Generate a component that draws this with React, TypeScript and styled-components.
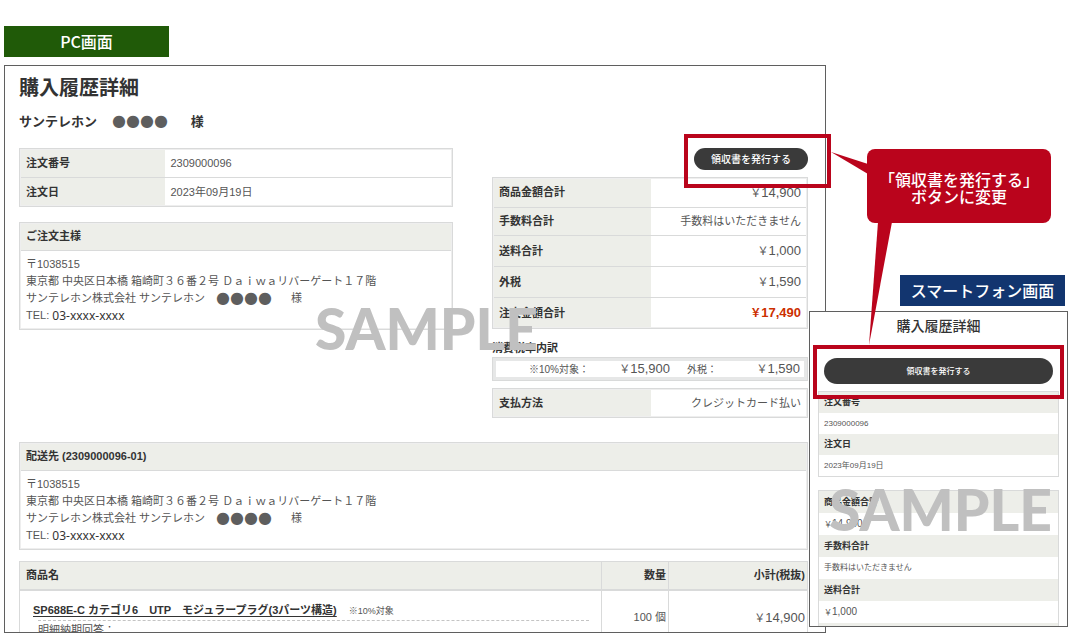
import React from "react";
import styled, { createGlobalStyle } from "styled-components";

const RED = "#ba041c";
const LINE = "#d9dada";
const HEAD = "#edeee9";

const GlobalStyle = createGlobalStyle`
  * { box-sizing: border-box; }
  body {
    margin: 0;
    background: #fff;
    color: #555;
    font-family: "Liberation Sans", "Noto Sans CJK JP", sans-serif;
    font-size: 11px;
    line-height: 17px;
  }
  h1, h2, h3, p, dl, dd { margin: 0; }
`;

const Page = styled.main`
  display: grid;
  grid-template-columns: minmax(0, 1fr) 242px;
  padding: 26px 4px 8px;
`;

const DesktopColumn = styled.section`
  display: flex;
  flex-direction: column;
  align-items: flex-start;
  gap: 8px;
`;

const PhoneColumn = styled.section`
  position: relative;
  display: flex;
  flex-direction: column;
  align-items: flex-end;
  padding-top: 123px;
`;

const ScreenTag = styled.h2<{ $color: string }>`
  width: 165px;
  height: 31px;
  background: ${(p) => p.$color};
  color: #fff;
  font: 500 16px/30px "Noto Sans CJK JP", sans-serif;
  text-align: center;
`;

const DesktopFrame = styled.div`
  position: relative;
  width: 100%;
  padding: 10px 17px 0 14px;
  border: 1px solid #5f5f5f;
`;

const Title = styled.h1`
  color: #333;
  font-size: 20px;
  font-weight: 700;
  line-height: 24px;
`;

const Customer = styled.p`
  display: flex;
  align-items: center;
  margin: 12px 0 16px;
  color: #333;
  font-size: 13px;
  font-weight: 700;
  line-height: 20px;
`;

const Mask = styled.span<{ $before: number; $after: number }>`
  margin: 0 ${(p) => p.$after}px 0 ${(p) => p.$before}px;
  padding-bottom: 2px;
  color: #5e5e5e;
  font: 400 16px/14px "DejaVu Sans", sans-serif;
`;

const Summary = styled.div`
  display: grid;
  grid-template-columns: minmax(0, 1fr) 316px;
  gap: 39px;
  margin-bottom: 24px;
`;

const Stack = styled.div<{ $gap: number }>`
  display: flex;
  flex-direction: column;
  gap: ${(p) => p.$gap}px;
`;

const DataTable = styled.table<{ $head: number; $align?: string }>`
  width: 100%;
  border-collapse: collapse;
  border: 1px solid ${LINE};
  outline: 1px solid #eeeeee;
  outline-offset: -2px;

  tr { height: 29px; }
  th, td {
    padding: 0 6px;
    border-bottom: 1px solid ${LINE};
  }
  th {
    width: ${(p) => p.$head}px;
    background: ${HEAD};
    color: #333;
    font-weight: 700;
    text-align: left;
  }
  td { text-align: ${(p) => p.$align ?? "left"}; }
`;

const Row = styled.tr<{ $tall?: boolean }>`
  && { height: ${(p) => (p.$tall ? 31 : 28)}px; }
  &&:first-child { height: 30px; }
`;

const Price = styled.span<{ $total?: boolean; $small?: boolean }>`
  color: ${(p) => (p.$total ? "#cc2f00" : "inherit")};
  font-size: ${(p) => (p.$small ? 8 : 11)}px;
  font-weight: ${(p) => (p.$total ? 700 : 400)};
  white-space: nowrap;
  b {
    font-size: ${(p) => (p.$small ? 10 : 13)}px;
    font-weight: inherit;
  }
`;

const Card = styled.section`
  border: 1px solid ${LINE};
  outline: 1px solid #eeeeee;
  outline-offset: -2px;
`;

const CardTitle = styled.h3`
  padding: 0 6px;
  border-bottom: 1px solid ${LINE};
  background: ${HEAD};
  color: #333;
  font-size: 11px;
  font-weight: 700;
  line-height: 27px;
`;

const Address = styled.address`
  padding: 5px 6px;
  font-style: normal;
`;

const AddressLine = styled.p`
  display: flex;
  align-items: center;
  height: 17px;
  white-space: pre;
`;

const Phone = styled.span`
  color: #333;
  font: 12px/17px "Noto Sans", sans-serif;
`;

const ReceiptSlot = styled.div<{ $wide?: boolean }>`
  position: relative;
  display: flex;
  justify-content: flex-end;
  padding: ${(p) => (p.$wide ? "0 14px" : "0")};
`;

const Highlight = styled.span<{ $wide?: boolean }>`
  position: absolute;
  z-index: 2;
  inset: ${(p) => (p.$wide ? "-13px 3px -15px 3px" : "-14px -23px -18px 192px")};
  border: 4px solid ${RED};
  pointer-events: none;
`;

const ReceiptButton = styled.button<{ $wide?: boolean }>`
  width: ${(p) => (p.$wide ? "100%" : "114px")};
  height: ${(p) => (p.$wide ? 26 : 22)}px;
  padding: 0;
  border: 0;
  border-radius: 13px;
  background: #3a3a3a;
  color: #fff;
  font: 500 ${(p) => (p.$wide ? 8 : 10)}px/20px "Noto Sans CJK JP", sans-serif;
`;

const TaxTitle = styled.h3`
  margin-top: 11px;
  color: #333;
  font-size: 11px;
  font-weight: 700;
  line-height: 17px;
`;

const TaxTable = styled.table`
  width: 100%;
  height: 24px;
  margin-bottom: 7px;
  border: 1px solid ${LINE};
  border-spacing: 0;
  outline: 3px solid #e6e7e7;
  outline-offset: -4px;
  th, td { padding: 0; font-weight: 400; text-align: right; }
  th { font-size: 10px; }
  td:last-child { padding-right: 7px; }
`;

const ProductTable = styled.table`
  width: 100%;
  margin-top: 11px;
  border: 1px solid ${LINE};
  border-bottom: 0;
  border-spacing: 0;
  th {
    height: 29px;
    padding: 0 2px 0 6px;
    border-bottom: 2px solid ${LINE};
    background: ${HEAD};
    color: #333;
    text-align: right;
  }
  th:first-child { text-align: left; }
  th + th, td + td { border-left: 1px solid ${LINE}; }
  td {
    height: 40px;
    padding: 18px 2px 0 0;
    text-align: right;
    vertical-align: top;
  }
  td:first-child { padding: 11px 12px 0 13px; text-align: left; }
`;

const ProductLink = styled.a`
  color: #333;
  font-weight: 700;
  text-underline-offset: 2px;
`;

const TaxNote = styled.small`
  margin-left: 12px;
  font-size: 9px;
`;

const DeliveryNote = styled.div`
  height: 12px;
  margin-left: 5px;
  overflow: hidden;
  border-top: 1px dashed #c4c4c4;
  line-height: 18px;
`;

const Watermark = styled.span<{ $left: number; $top: number }>`
  position: absolute;
  z-index: 1;
  left: ${(p) => p.$left}px;
  top: ${(p) => p.$top}px;
  color: #c0c0c0;
  font: 900 57px/61px Lato, sans-serif;
  pointer-events: none;
`;

const Callout = styled.p`
  position: relative;
  z-index: 3;
  width: 184px;
  height: 74px;
  margin: 0 17px 52px 0;
  padding-top: 22px;
  border-radius: 8px;
  background: ${RED};
  color: #fff;
  font: 500 16px/17px "Noto Sans CJK JP", sans-serif;
  text-align: center;
  white-space: nowrap;
`;

const Tails = styled.svg`
  position: absolute;
  left: -36px;
  top: 0;
  fill: ${RED};
  pointer-events: none;
`;

const PhoneTag = styled(ScreenTag)`
  margin: 0 3px 5px 0;
`;

const PhoneFrame = styled.div`
  position: relative;
  width: 259px;
  border: 1px solid #5f5f5f;
  background: #fff;
`;

const PhoneTitle = styled.h3`
  margin: 3px 0 21px;
  color: #333;
  font-size: 14px;
  font-weight: 500;
  line-height: 22px;
  text-align: center;
`;

const PhoneList = styled.dl<{ $row: number; $open?: boolean }>`
  margin: 0 8px;
  border: 1px solid ${LINE};
  border-bottom-width: ${(p) => (p.$open ? 0 : 1)}px;
  font-size: 8px;
  dt, dd {
    height: ${(p) => p.$row}px;
    padding-left: 5px;
    line-height: ${(p) => p.$row}px;
  }
  dt {
    background: ${HEAD};
    color: #333;
    font-size: 9px;
    font-weight: 700;
  }
`;

const PhoneListEdge = styled.div`
  height: 3px;
  background: ${HEAD};
`;

function Yen({ value, total, small }: { value: string; total?: boolean; small?: boolean }) {
  return (
    <Price $total={total} $small={small}>
      ￥<b>{value}</b>
    </Price>
  );
}

function AddressCard({ title }: { title: string }) {
  return (
    <Card>
      <CardTitle>{title}</CardTitle>
      <Address>
        <AddressLine>〒1038515</AddressLine>
        <AddressLine>東京都 中央区日本橋 箱崎町３６番２号 Ｄａｉｗａリバーゲート１７階</AddressLine>
        <AddressLine>
          サンテレホン株式会社 サンテレホン
          <Mask $before={11} $after={19}>●●●●</Mask>様
        </AddressLine>
        <AddressLine>
          {"TEL: "}
          <Phone>03-xxxx-xxxx</Phone>
        </AddressLine>
      </Address>
    </Card>
  );
}

function Receipt({ wide }: { wide?: boolean }) {
  return (
    <ReceiptSlot $wide={wide}>
      <ReceiptButton type="button" $wide={wide}>領収書を発行する</ReceiptButton>
      <Highlight $wide={wide} />
    </ReceiptSlot>
  );
}

const totals = [
  { label: "商品金額合計", value: "14,900" },
  { label: "手数料合計", text: "手数料はいただきません" },
  { label: "送料合計", value: "1,000" },
  { label: "外税", value: "1,590" },
  { label: "注文金額合計", value: "17,490", total: true },
];

function DesktopScreen() {
  return (
    <DesktopFrame>
      <Title>購入履歴詳細</Title>
      <Customer>
        サンテレホン<Mask $before={15} $after={23}>●●●●</Mask>様
      </Customer>
      <Summary>
        <Stack $gap={15}>
          <DataTable $head={145}>
            <tbody>
              <tr><th scope="row">注文番号</th><td>2309000096</td></tr>
              <tr><th scope="row">注文日</th><td>2023年09月19日</td></tr>
            </tbody>
          </DataTable>
          <AddressCard title="ご注文主様" />
        </Stack>
        <div>
          <Stack $gap={7}>
            <Receipt />
            <DataTable $head={158} $align="right">
              <tbody>
                {totals.map((t) => (
                  <Row key={t.label} $tall={!t.text}>
                    <th scope="row">{t.label}</th>
                    <td>{t.value ? <Yen value={t.value} total={t.total} /> : t.text}</td>
                  </Row>
                ))}
              </tbody>
            </DataTable>
          </Stack>
          <TaxTitle>消費税率内訳</TaxTitle>
          <TaxTable>
            <colgroup>
              <col width="96" />
              <col width="81" />
              <col width="47" />
              <col />
            </colgroup>
            <tbody>
              <tr>
                <th scope="row">※10%対象：</th>
                <td><Yen value="15,900" /></td>
                <th scope="row">外税：</th>
                <td><Yen value="1,590" /></td>
              </tr>
            </tbody>
          </TaxTable>
          <DataTable $head={158} $align="right">
            <tbody>
              <tr><th scope="row">支払方法</th><td>クレジットカード払い</td></tr>
            </tbody>
          </DataTable>
        </div>
      </Summary>
      <AddressCard title="配送先 (2309000096-01)" />
      <ProductTable>
        <colgroup>
          <col />
          <col width="67" />
          <col width="139" />
        </colgroup>
        <thead>
          <tr><th scope="col">商品名</th><th scope="col">数量</th><th scope="col">小計(税抜)</th></tr>
        </thead>
        <tbody>
          <tr>
            <td>
              <ProductLink href="#product">SP688E-C カテゴリ6　UTP　モジュラープラグ(3パーツ構造)</ProductLink>
              <TaxNote>※10%対象</TaxNote>
              <DeliveryNote>明細納期回答：</DeliveryNote>
            </td>
            <td>100 個</td>
            <td><Yen value="14,900" /></td>
          </tr>
        </tbody>
      </ProductTable>
      <Watermark $left={310} $top={232}>SAMPLE</Watermark>
    </DesktopFrame>
  );
}

function PhoneScreen() {
  return (
    <PhoneFrame>
      <PhoneTitle>購入履歴詳細</PhoneTitle>
      <Stack $gap={7}>
        <Receipt wide />
        <Stack $gap={13}>
          <PhoneList $row={21}>
            <dt>注文番号</dt>
            <dd>2309000096</dd>
            <dt>注文日</dt>
            <dd>2023年09月19日</dd>
          </PhoneList>
          <PhoneList $row={22} $open>
            <dt>商品金額合計</dt>
            <dd><Yen value="14,900" small /></dd>
            <dt>手数料合計</dt>
            <dd>手数料はいただきません</dd>
            <dt>送料合計</dt>
            <dd><Yen value="1,000" small /></dd>
            <PhoneListEdge />
          </PhoneList>
        </Stack>
      </Stack>
      <Watermark $left={19} $top={167}>SAMPLE</Watermark>
    </PhoneFrame>
  );
}

export default function App() {
  return (
    <>
      <GlobalStyle />
      <Page>
        <DesktopColumn>
          <ScreenTag $color="#205a08">PC画面</ScreenTag>
          <DesktopScreen />
        </DesktopColumn>
        <PhoneColumn>
          <Callout>
            「領収書を発行する」<br />ボタンに変更
            <Tails width="70" height="197" viewBox="0 0 70 197" aria-hidden="true">
              <path d="M0 3L37 15V25Z" />
              <path d="M47 73H61L38 196Z" />
            </Tails>
          </Callout>
          <PhoneTag $color="#12356f">スマートフォン画面</PhoneTag>
          <PhoneScreen />
        </PhoneColumn>
      </Page>
    </>
  );
}
